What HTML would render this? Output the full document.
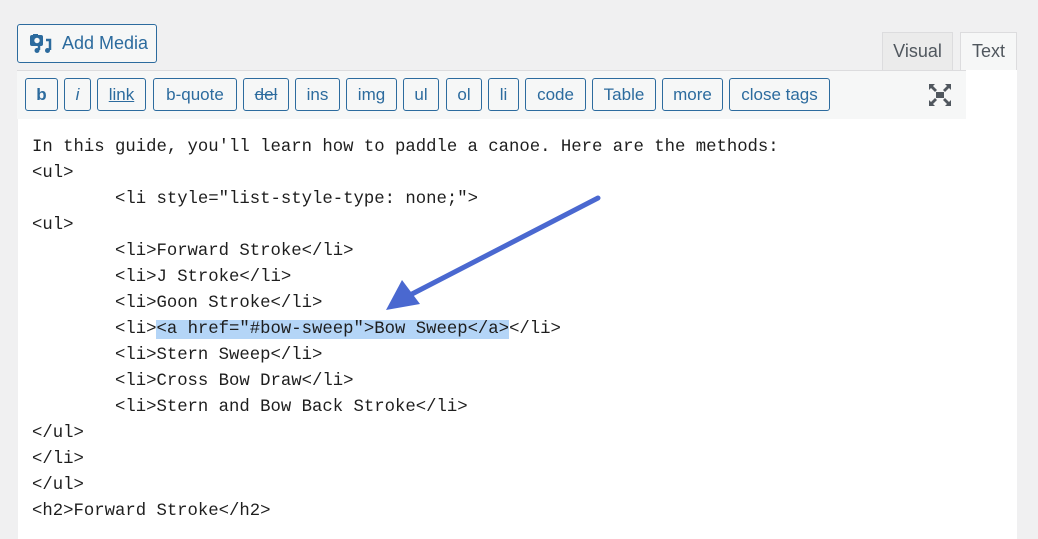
<!DOCTYPE html>
<html><head><style>
body{margin:0;width:1038px;height:526px;background:#f0f0f1;position:relative;overflow:hidden;font-family:"Liberation Sans",sans-serif}
.am{position:absolute;left:17px;top:24px;width:140px;height:39px;border:1px solid #2c6b9e;border-radius:3px;background:#f6f7f7;box-sizing:border-box;color:#2c6b9e;font-size:18px;line-height:37px}
.am span{position:absolute;left:44px}
.tab{position:absolute;top:32px;height:38px;box-sizing:border-box;border:1px solid #dcdcde;border-bottom:none;font-size:18px;color:#50575e;line-height:36px;text-align:center}
.tb{position:absolute;left:17px;top:70px;width:949px;height:49px;background:#f6f7f7;border-top:1px solid #dcdcde;box-sizing:border-box}
.wr{position:absolute;left:966px;top:70px;width:51px;height:49px;background:#fff}
.ed{position:absolute;left:18px;top:119px;width:999px;height:420px;background:#fff}
.b{position:absolute;top:78px;height:33px;box-sizing:border-box;border:1px solid #2c6b9e;border-radius:3px;background:#f6f7f7;color:#2c6b9e;font-size:17px;line-height:31px;text-align:center}
pre{position:absolute;left:32px;top:135px;margin:0;font-family:"Liberation Mono",monospace;font-size:17.3px;line-height:26px;color:#1e1e1e;tab-size:8}
.hl{background:#b4d5f7}
</style></head><body>
<div class="am"><svg style="position:absolute;left:12px;top:9px" width="22" height="20" viewBox="0 0 22 20"><rect x="0" y="1" width="13" height="11" rx="2" fill="#2c6b9e"/><rect x="3" y="0" width="5" height="3" fill="#2c6b9e"/><circle cx="7" cy="6.5" r="2.7" fill="#f6f7f7"/><path d="M16 6h4v10" stroke="#2c6b9e" stroke-width="2.5" fill="none"/><circle cx="17.5" cy="16.5" r="2.5" fill="#2c6b9e"/><circle cx="7" cy="16.5" r="2.5" fill="#2c6b9e"/><path d="M9 16V9" stroke="#2c6b9e" stroke-width="2.5"/></svg><span>Add Media</span></div>
<div class="tab" style="left:882px;width:71px;background:#ebebeb">Visual</div>
<div class="tab" style="left:960px;width:57px;background:#f6f7f7;height:39px">Text</div>
<div class="tb"></div><div class="wr"></div><div class="ed"></div>
<div class="b" style="left:25px;width:33px;font-weight:bold">b</div>
<div class="b" style="left:64px;width:27px;font-style:italic">i</div>
<div class="b" style="left:97px;width:49px;text-decoration:underline">link</div>
<div class="b" style="left:153px;width:84px">b-quote</div>
<div class="b" style="left:243px;width:46px;text-decoration:line-through">del</div>
<div class="b" style="left:295px;width:45px">ins</div>
<div class="b" style="left:346px;width:51px">img</div>
<div class="b" style="left:403px;width:36px">ul</div>
<div class="b" style="left:446px;width:36px">ol</div>
<div class="b" style="left:488px;width:31px">li</div>
<div class="b" style="left:525px;width:61px">code</div>
<div class="b" style="left:592px;width:64px">Table</div>
<div class="b" style="left:662px;width:61px">more</div>
<div class="b" style="left:729px;width:101px">close tags</div>
<svg style="position:absolute;left:929px;top:84px" width="22" height="22" viewBox="0 0 22 22" fill="#50575e"><rect x="7" y="8" width="8" height="6"/><path d="M0 0h6l-2 2 4 4-2 2-4-4-2 2zM22 0v6l-2-2-4 4-2-2 4-4-2-2zM0 22v-6l2 2 4-4 2 2-4 4 2 2zM22 22h-6l2-2-4-4 2-2 4 4 2-2z"/></svg>
<pre>In this guide, you'll learn how to paddle a canoe. Here are the methods:
&lt;ul&gt;
	&lt;li style="list-style-type: none;"&gt;
&lt;ul&gt;
	&lt;li&gt;Forward Stroke&lt;/li&gt;
	&lt;li&gt;J Stroke&lt;/li&gt;
	&lt;li&gt;Goon Stroke&lt;/li&gt;
	&lt;li&gt;<span class="hl">&lt;a href="#bow-sweep"&gt;Bow Sweep&lt;/a&gt;</span>&lt;/li&gt;
	&lt;li&gt;Stern Sweep&lt;/li&gt;
	&lt;li&gt;Cross Bow Draw&lt;/li&gt;
	&lt;li&gt;Stern and Bow Back Stroke&lt;/li&gt;
&lt;/ul&gt;
&lt;/li&gt;
&lt;/ul&gt;
&lt;h2&gt;Forward Stroke&lt;/h2&gt;</pre>
<svg style="position:absolute;left:0;top:0" width="1038" height="526"><path d="M598 198L412 294" stroke="#4a68d0" stroke-width="5" stroke-linecap="round"/><path d="M386 310L402 280L420 304Z" fill="#4a68d0"/></svg>
</body></html>
